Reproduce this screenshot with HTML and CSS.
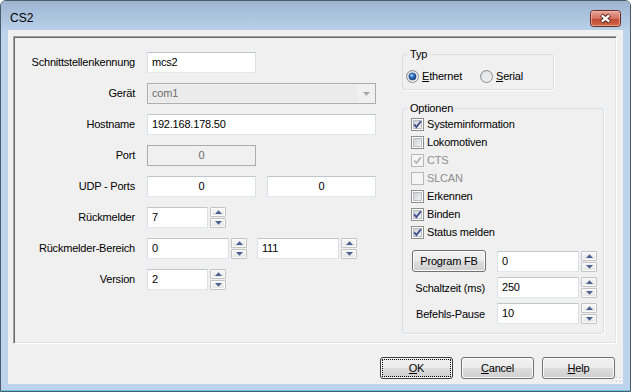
FILE: index.html
```html
<!DOCTYPE html>
<html lang="de">
<head>
<meta charset="utf-8">
<title>CS2</title>
<link rel="stylesheet" href="styles.css">
</head>
<body>
<svg class="defs" width="0" height="0" aria-hidden="true">
  <defs>
    <linearGradient id="cbg" x1="0" y1="0" x2="1" y2="1">
      <stop offset="0" stop-color="#c9cdd3"/>
      <stop offset="1" stop-color="#f6f6f6"/>
    </linearGradient>
    <linearGradient id="rg" x1="0" y1="0" x2="1" y2="1">
      <stop offset="0" stop-color="#cfd2d6"/>
      <stop offset="1" stop-color="#fbfbfb"/>
    </linearGradient>
    <radialGradient id="rdot" cx="0.4" cy="0.35" r="0.7">
      <stop offset="0" stop-color="#a9dcff"/>
      <stop offset="0.45" stop-color="#2b6fbf"/>
      <stop offset="1" stop-color="#0f3470"/>
    </radialGradient>
    <linearGradient id="closeg" x1="0" y1="0" x2="0" y2="1">
      <stop offset="0" stop-color="#e9a99c"/>
      <stop offset="0.5" stop-color="#d5705e"/>
      <stop offset="0.55" stop-color="#c24b35"/>
      <stop offset="1" stop-color="#cf6a4c"/>
    </linearGradient>
    <symbol id="cb-off" viewBox="0 0 13 13">
      <rect x="0.5" y="0.5" width="12" height="12" fill="#fff" stroke="#8f8f8f"/>
      <rect x="2.5" y="2.5" width="8" height="8" fill="url(#cbg)" stroke="#b9bdc2"/>
    </symbol>
    <symbol id="cb-on" viewBox="0 0 13 13">
      <rect x="0.5" y="0.5" width="12" height="12" fill="#fff" stroke="#8f8f8f"/>
      <rect x="2.5" y="2.5" width="8" height="8" fill="url(#cbg)" stroke="#b9bdc2"/>
      <path d="M3.2 6.4 L5.4 9 L9.9 3.2" fill="none" stroke="#3c4d8c" stroke-width="1.8"/>
    </symbol>
    <symbol id="cb-dis-on" viewBox="0 0 13 13">
      <rect x="0.5" y="0.5" width="12" height="12" fill="#f4f4f4" stroke="#b8b8b8"/>
      <path d="M3.2 6.4 L5.4 9 L9.9 3.2" fill="none" stroke="#b0b0b0" stroke-width="1.6"/>
    </symbol>
    <symbol id="cb-dis-off" viewBox="0 0 13 13">
      <rect x="0.5" y="0.5" width="12" height="12" fill="#f4f4f4" stroke="#b8b8b8"/>
    </symbol>
    <symbol id="rad-on" viewBox="0 0 13 13">
      <circle cx="6.5" cy="6.5" r="6" fill="url(#rg)" stroke="#8a8c8e"/>
      <circle cx="6.5" cy="6.5" r="3.6" fill="url(#rdot)" stroke="#1d4783" stroke-width="0.6"/>
    </symbol>
    <symbol id="rad-off" viewBox="0 0 13 13">
      <circle cx="6.5" cy="6.5" r="6" fill="url(#rg)" stroke="#8a8c8e"/>
      <circle cx="6.5" cy="6.5" r="4" fill="#e9eaec"/>
    </symbol>
    <symbol id="up" viewBox="0 0 7 4">
      <polygon points="0,4 7,4 3.5,0.3" fill="#4c5f93"/>
    </symbol>
    <symbol id="dn" viewBox="0 0 7 4">
      <polygon points="0,0 7,0 3.5,3.7" fill="#4c5f93"/>
    </symbol>
  </defs>
</svg>

<div class="window">
  <div class="titlebar">
    <span class="title">CS2</span>
    <span class="close">
      <svg width="31" height="17" viewBox="0 0 31 17">
        <rect x="0.5" y="0.5" width="30" height="16" rx="3" fill="url(#closeg)" stroke="#6b2b22"/>
        <rect x="1.5" y="1.5" width="28" height="14" rx="2" fill="none" stroke="#f0c2b8" stroke-opacity="0.6"/>
        <path d="M11.5 5 L19.5 12 M19.5 5 L11.5 12" stroke="#4c1d16" stroke-width="4.2" stroke-linecap="butt"/>
        <path d="M11.8 5.4 L19.2 11.6 M19.2 5.4 L11.8 11.6" stroke="#ffffff" stroke-width="2.4"/>
      </svg>
    </span>
  </div>

  <div class="client">
    <div class="panel">
      <div class="form">
        <div class="lbl">Schnittstellenkennung</div>
        <div class="fld"><div class="edit w109">mcs2</div></div>

        <div class="lbl">Gerät</div>
        <div class="fld">
          <div class="combo">
            <span class="combo-text">com1</span>
            <span class="combo-btn"><svg width="7" height="4" viewBox="0 0 7 4"><polygon points="0,0 7,0 3.5,3.8" fill="#a6a6a6"/></svg></span>
          </div>
        </div>

        <div class="lbl">Hostname</div>
        <div class="fld"><div class="edit w229">192.168.178.50</div></div>

        <div class="lbl">Port</div>
        <div class="fld"><div class="edit w109 center dis">0</div></div>

        <div class="lbl">UDP - Ports</div>
        <div class="fld gap11">
          <div class="edit w109 center">0</div>
          <div class="edit w109 center">0</div>
        </div>

        <div class="lbl">Rückmelder</div>
        <div class="fld">
          <div class="edit w61">7</div>
          <div class="spin"><span class="sb"><svg width="7" height="4"><use href="#up"/></svg></span><span class="sb"><svg width="7" height="4"><use href="#dn"/></svg></span></div>
        </div>

        <div class="lbl">Rückmelder-Bereich</div>
        <div class="fld">
          <div class="edit w82">0</div>
          <div class="spin"><span class="sb"><svg width="7" height="4"><use href="#up"/></svg></span><span class="sb"><svg width="7" height="4"><use href="#dn"/></svg></span></div>
          <div class="edit w82 ml10">111</div>
          <div class="spin"><span class="sb"><svg width="7" height="4"><use href="#up"/></svg></span><span class="sb"><svg width="7" height="4"><use href="#dn"/></svg></span></div>
        </div>

        <div class="lbl">Version</div>
        <div class="fld">
          <div class="edit w61">2</div>
          <div class="spin"><span class="sb"><svg width="7" height="4"><use href="#up"/></svg></span><span class="sb"><svg width="7" height="4"><use href="#dn"/></svg></span></div>
        </div>
      </div>

      <div class="side">
        <fieldset class="grp typ">
          <legend>Typ</legend>
          <div class="radios">
            <span class="radio first"><svg width="13" height="13"><use href="#rad-on"/></svg><span><u>E</u>thernet</span></span>
            <span class="radio"><svg width="13" height="13"><use href="#rad-off"/></svg><span><u>S</u>erial</span></span>
          </div>
        </fieldset>

        <fieldset class="grp opt">
          <legend>Optionen</legend>
          <div class="checks">
            <div class="cbrow"><svg width="13" height="13"><use href="#cb-on"/></svg><span>Systeminformation</span></div>
            <div class="cbrow"><svg width="13" height="13"><use href="#cb-off"/></svg><span>Lokomotiven</span></div>
            <div class="cbrow grey"><svg width="13" height="13"><use href="#cb-dis-on"/></svg><span>CTS</span></div>
            <div class="cbrow grey"><svg width="13" height="13"><use href="#cb-dis-off"/></svg><span>SLCAN</span></div>
            <div class="cbrow"><svg width="13" height="13"><use href="#cb-off"/></svg><span>Erkennen</span></div>
            <div class="cbrow"><svg width="13" height="13"><use href="#cb-on"/></svg><span>Binden</span></div>
            <div class="cbrow"><svg width="13" height="13"><use href="#cb-on"/></svg><span>Status melden</span></div>
          </div>
          <div class="lower">
            <div class="lrow r22">
              <div class="lcol"><div class="btn pfb">Program FB</div></div>
              <div class="edit w82">0</div>
              <div class="spin"><span class="sb"><svg width="7" height="4"><use href="#up"/></svg></span><span class="sb"><svg width="7" height="4"><use href="#dn"/></svg></span></div>
            </div>
            <div class="lrow">
              <div class="lcol right">Schaltzeit (ms)</div>
              <div class="edit w82">250</div>
              <div class="spin"><span class="sb"><svg width="7" height="4"><use href="#up"/></svg></span><span class="sb"><svg width="7" height="4"><use href="#dn"/></svg></span></div>
            </div>
            <div class="lrow">
              <div class="lcol right">Befehls-Pause</div>
              <div class="edit w82">10</div>
              <div class="spin"><span class="sb"><svg width="7" height="4"><use href="#up"/></svg></span><span class="sb"><svg width="7" height="4"><use href="#dn"/></svg></span></div>
            </div>
          </div>
        </fieldset>
      </div>
    </div>

    <div class="buttons">
      <div class="btn dlg default"><span><u>O</u>K</span></div>
      <div class="btn dlg"><span><u>C</u>ancel</span></div>
      <div class="btn dlg"><span><u>H</u>elp</span></div>
    </div>

    <svg class="grip" width="10" height="10" viewBox="0 0 10 10">
      <rect x="8" y="0" width="2" height="2" fill="#fff"/><rect x="8" y="0" width="1" height="1" fill="#b8bcc2"/>
      <rect x="8" y="4" width="2" height="2" fill="#fff"/><rect x="8" y="4" width="1" height="1" fill="#b8bcc2"/>
      <rect x="4" y="4" width="2" height="2" fill="#fff"/><rect x="4" y="4" width="1" height="1" fill="#b8bcc2"/>
      <rect x="8" y="8" width="2" height="2" fill="#fff"/><rect x="8" y="8" width="1" height="1" fill="#b8bcc2"/>
      <rect x="4" y="8" width="2" height="2" fill="#fff"/><rect x="4" y="8" width="1" height="1" fill="#b8bcc2"/>
      <rect x="0" y="8" width="2" height="2" fill="#fff"/><rect x="0" y="8" width="1" height="1" fill="#b8bcc2"/>
    </svg>
  </div>
</div>
</body>
</html>
```

FILE: styles.css
```css
* { box-sizing: border-box; }

html, body { margin: 0; padding: 0; }

body {
  width: 631px;
  height: 392px;
  overflow: hidden;
  background: #ffffff;
  font-family: "Liberation Sans", Arial, sans-serif;
  font-size: 11px;
  letter-spacing: -0.2px;
  color: #000;
}

.defs { display: block; width: 0; height: 0; overflow: hidden; }

.window {
  width: 631px;
  height: 392px;
  border: 1px solid #4d5a69;
  border-radius: 6px 6px 0 0;
  background: #bcd3eb;
  box-shadow: inset 0 -1px 0 #62c6e4;
  display: flex;
  flex-direction: column;
}

.titlebar {
  flex: none;
  height: 29px;
  padding: 0 9px 0 9px;
  display: flex;
  justify-content: space-between;
  align-items: flex-start;
  background: linear-gradient(#9db5d1, #b9d0e9);
  border-radius: 5px 5px 0 0;
}

.title {
  margin-top: 10px;
  font-size: 12px;
  line-height: 15px;
  letter-spacing: 0;
  color: #000;
}

.close { margin-top: 9px; display: block; height: 17px; }
.close svg { display: block; }

.client {
  flex: none;
  position: relative;
  height: 354px;
  margin: 0 7px;
  background: #f0f0f0;
  padding: 6px 0 0 5px;
  display: flex;
  flex-direction: column;
}

.panel {
  flex: none;
  width: 604px;
  height: 308px;
  border: 1px solid;
  border-color: #a0a0a0 #ffffff #ffffff #a0a0a0;
  box-shadow: inset 1px 1px 0 #696969, inset -1px -1px 0 #e3e3e3;
  padding: 1px;
  display: flex;
}

/* left form */
.form {
  flex: none;
  width: 387px;
  padding-top: 14px;
  display: grid;
  grid-template-columns: 120px auto;
  grid-auto-rows: 21px;
  column-gap: 12px;
  row-gap: 10px;
  align-content: start;
}

.lbl {
  text-align: right;
  line-height: 21px;
  white-space: nowrap;
}

.fld { display: flex; align-items: center; }
.fld.gap11 { gap: 11px; }

.edit {
  flex: none;
  height: 21px;
  border: 1px solid;
  border-color: #c2c5cb #dcdfe4 #e3e6ea #dcdfe4;
  background: #ffffff;
  line-height: 19px;
  padding: 0 4px;
  white-space: nowrap;
  overflow: hidden;
}
.edit.center { text-align: center; }
.edit.dis {
  background: #f0f0f0;
  border-color: #adadad;
  color: #6d6d6d;
}

.w61 { width: 61px; }
.w82 { width: 82px; }
.w109 { width: 109px; }
.w229 { width: 229px; }
.ml10 { margin-left: 10px; }

.combo {
  width: 229px;
  height: 21px;
  border: 1px solid #adadad;
  background: #f0f0f0;
  display: flex;
}
.combo-text {
  flex: 1;
  margin: 1px 0 1px 1px;
  background: #ebebeb;
  color: #6d6d6d;
  line-height: 17px;
  padding-left: 3px;
}
.combo-btn {
  width: 18px;
  display: flex;
  align-items: center;
  justify-content: center;
}
.combo-btn svg { display: block; }

.spin {
  flex: none;
  width: 16px;
  height: 21px;
  margin-left: 2px;
  display: flex;
  flex-direction: column;
  gap: 1px;
}
.sb {
  flex: 1;
  border: 1px solid #c4c4c4;
  border-radius: 1px;
  background: linear-gradient(#f8f8f8, #e4e4e4);
  box-shadow: inset 0 0 0 1px #fbfbfb;
  display: flex;
  align-items: center;
  justify-content: center;
}
.sb svg { display: block; }

/* right side */
.side {
  flex: none;
  width: 203px;
  padding-top: 10px;
  display: flex;
  flex-direction: column;
}

.grp {
  margin: 0;
  padding: 0;
  border: 1px solid #d5dfe5;
  border-radius: 3px;
  box-shadow: 1px 1px 0 #ffffff;
  min-width: 0;
}
.grp legend {
  margin-left: 5px;
  padding: 0 2px;
  line-height: 13px;
}

.typ { width: 152px; height: 42px; }
.opt { width: 202px; height: 232px; margin-top: 12px; }

.radios {
  display: flex;
  padding: 9px 0 0 3px;
}
.radio {
  display: flex;
  align-items: center;
  gap: 3px;
  height: 13px;
  line-height: 13px;
}
.radio.first { width: 74px; }
.radio svg, .cbrow svg { display: block; flex: none; }

.checks { padding-left: 8px; }
.cbrow {
  height: 18px;
  display: flex;
  align-items: center;
  gap: 3px;
}
.cbrow.grey { color: #8e8e8e; }

.lower {
  margin: 9px 0 0 9px;
  display: flex;
  flex-direction: column;
  gap: 5px;
}
.lrow {
  height: 21px;
  display: flex;
  align-items: center;
}
.lrow.r22 { height: 22px; }
.lcol {
  width: 74px;
  margin-right: 11px;
  white-space: nowrap;
}
.lcol.right { text-align: right; padding-right: 1px; }

.btn {
  height: 22px;
  border: 1px solid #707070;
  border-radius: 3px;
  background: linear-gradient(#f2f2f2 0%, #ebebeb 48%, #dddddd 52%, #cfcfcf 100%);
  box-shadow: inset 0 0 0 1px #fbfbfb;
  display: flex;
  align-items: center;
  justify-content: center;
  white-space: nowrap;
}
.pfb { width: 74px; }

.buttons {
  flex: none;
  margin-top: 13px;
  padding-right: 8px;
  display: flex;
  justify-content: flex-end;
  gap: 8px;
}
.dlg { width: 73px; }
.default {
  border-color: #3c3c3c;
  outline: 1px dotted #000;
  outline-offset: -3px;
}

.grip {
  position: absolute;
  right: 1px;
  bottom: 1px;
  display: block;
}
```
